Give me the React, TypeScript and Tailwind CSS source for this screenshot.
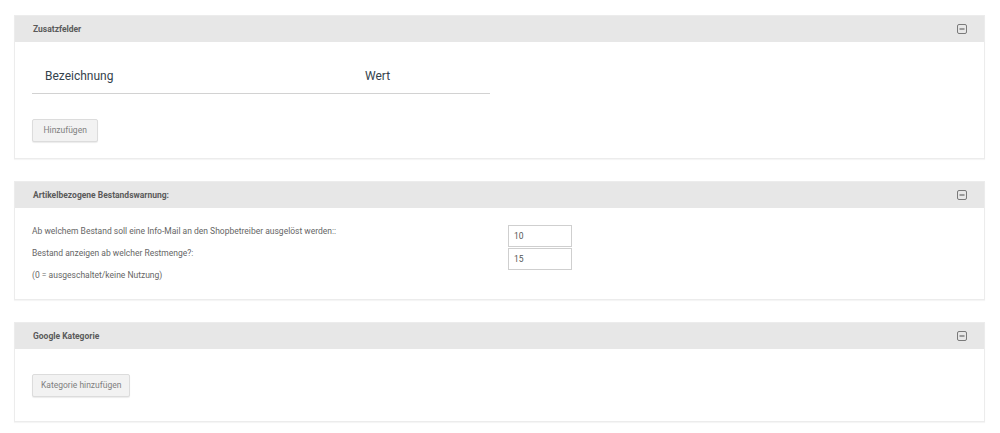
import type { ReactNode } from "react";

function CollapseIcon() {
  return (
    <svg width="10" height="10" viewBox="0 0 10 10" className="shrink-0">
      <rect x="0.5" y="0.5" width="9" height="9" rx="1.5" fill="none" stroke="#7a7a7a" strokeWidth="1" />
      <rect x="2.5" y="4.3" width="5" height="1.4" fill="#7a7a7a" />
    </svg>
  );
}

function Panel({ title, children }: { title: string; children: ReactNode }) {
  return (
    <section className="border border-[#ececec] bg-white shadow-[0_1px_1px_rgba(0,0,0,0.04)]">
      <header className="flex h-[26px] items-center justify-between bg-[#e7e7e7] pl-[18px] pr-[17px]">
        <h2 className="text-[8.5px] font-bold text-[#5a5a5a]">{title}</h2>
        <CollapseIcon />
      </header>
      {children}
    </section>
  );
}

function GreyButton({ label, wide }: { label: string; wide?: boolean }) {
  return (
    <button
      className={`flex h-[23px] items-center rounded-[2px] border border-[#dcdcdc] bg-[#f2f2f2] text-[8.5px] text-[#808080] shadow-[0_1px_1px_rgba(0,0,0,0.08)] ${
        wide ? "px-[10.5px]" : "px-[8px]"
      }`}
    >
      {label}
    </button>
  );
}

export default function App() {
  return (
    <div
      className="flex min-h-[433px] flex-col gap-[22px] bg-white pl-[14px] pr-[15px] pt-[15px]"
      style={{ fontFamily: "Roboto, 'Liberation Sans', sans-serif" }}
    >
      <Panel title="Zusatzfelder">
        <div className="flex flex-col items-start px-[17px] pb-[16px] pt-[16px]">
          <div className="flex h-[36px] w-[458px] items-center border-b border-[#d2d2d2] text-[12px] text-[#34424c]">
            <span className="w-[320px] pl-[13px]">Bezeichnung</span>
            <span className="pl-[13px]">Wert</span>
          </div>
          <div className="mt-[25px] flex">
            <GreyButton label="Hinzufügen" wide />
          </div>
        </div>
      </Panel>

      <Panel title="Artikelbezogene Bestandswarnung:">
        <div className="flex px-[17px] pb-[13px] pt-[12px]">
          <div className="flex w-[476px] flex-col text-[8.5px] leading-[22px] text-[#666]">
            <span>Ab welchem Bestand soll eine Info-Mail an den Shopbetreiber ausgelöst werden::</span>
            <span>Bestand anzeigen ab welcher Restmenge?:</span>
            <span>(0 = ausgeschaltet/keine Nutzung)</span>
          </div>
          <div className="mt-[5px] flex flex-col gap-[1px]">
            <input
              defaultValue="10"
              className="h-[22px] w-[64px] border border-[#cfcfcf] bg-white pl-[5px] text-[8.5px] text-[#555] outline-none"
            />
            <input
              defaultValue="15"
              className="h-[22px] w-[64px] border border-[#cfcfcf] bg-white pl-[5px] text-[8.5px] text-[#555] outline-none"
            />
          </div>
        </div>
      </Panel>

      <Panel title="Google Kategorie">
        <div className="flex px-[17px] pb-[24px] pt-[25px]">
          <GreyButton label="Kategorie hinzufügen" />
        </div>
      </Panel>
    </div>
  );
}
